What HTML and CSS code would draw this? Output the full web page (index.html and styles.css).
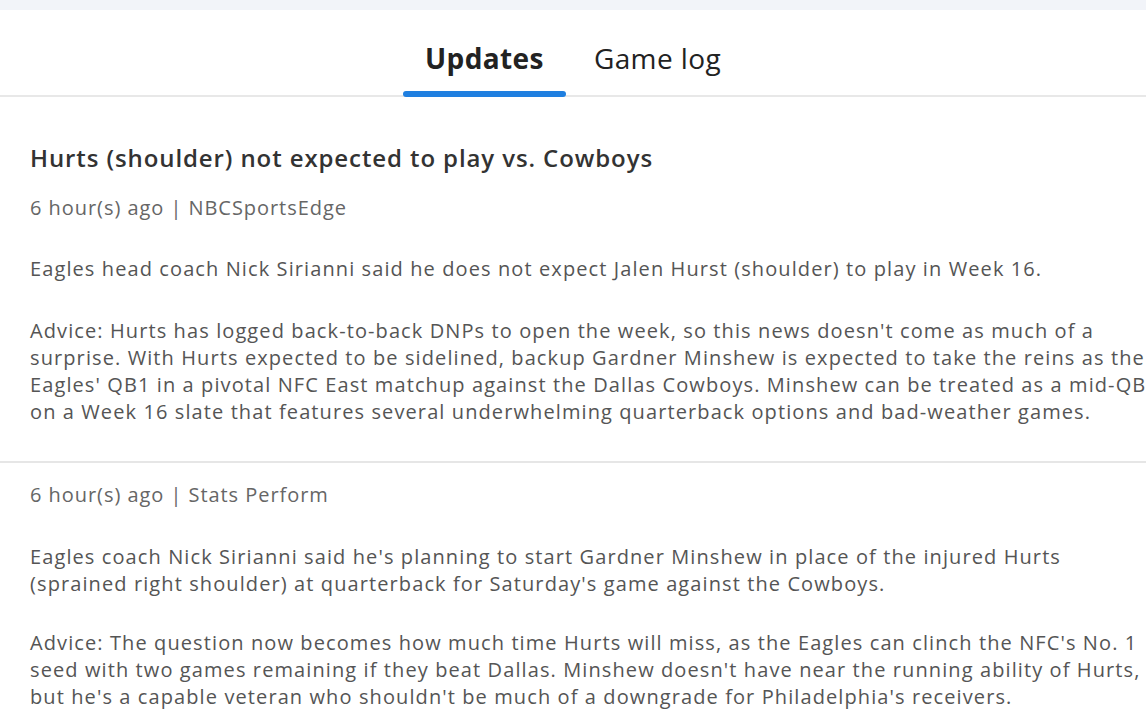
FILE: index.html
```html
<!DOCTYPE html>
<html lang="en">
<head>
<meta charset="utf-8">
<title>Player updates</title>
<link rel="stylesheet" href="styles.css">
</head>
<body>
<div class="topstrip"></div>
<nav class="tabs">
  <div class="tab active">Updates</div>
  <div class="tab">Game log</div>
</nav>
<main class="feed">
  <article class="update">
    <h2 class="title">Hurts (shoulder) not expected to play vs. Cowboys</h2>
    <div class="meta">6 hour(s) ago | NBCSportsEdge</div>
    <p class="body first">Eagles head coach Nick Sirianni said he does not expect Jalen Hurst (shoulder) to play in Week 16.</p>
    <p class="body advice">Advice: Hurts has logged back-to-back DNPs to open the week, so this news doesn't come as much of a surprise. With Hurts expected to be sidelined, backup Gardner Minshew is expected to take the reins as the Eagles' QB1 in a pivotal NFC East matchup against the Dallas Cowboys. Minshew can be treated as a mid-QB2 on a Week 16 slate that features several underwhelming quarterback options and bad-weather games.</p>
  </article>
  <article class="update">
    <div class="meta">6 hour(s) ago | Stats Perform</div>
    <p class="body first">Eagles coach Nick Sirianni said he's planning to start Gardner Minshew in place of the injured Hurts (sprained right shoulder) at quarterback for Saturday's game against the Cowboys.</p>
    <p class="body advice">Advice: The question now becomes how much time Hurts will miss, as the Eagles can clinch the NFC's No. 1 seed with two games remaining if they beat Dallas. Minshew doesn't have near the running ability of Hurts, but he's a capable veteran who shouldn't be much of a downgrade for Philadelphia's receivers.</p>
  </article>
</main>
</body>
</html>
```
FILE: styles.css
```css
html, body {
  margin: 0;
  padding: 0;
  overflow: hidden;
  background: #ffffff;
}
body {
  font-family: "Open Sans", "Noto Sans", sans-serif;
  width: 1146px;
  height: 716px;
}
.topstrip {
  height: 10px;
  background: #f2f4f9;
}
.tabs {
  display: flex;
  justify-content: center;
  gap: 6px;
  border-bottom: 2px solid #e8e8e8;
  padding-top: 29px;
}
.tab {
  font-size: 28px;
  letter-spacing: 0.4px;
  color: #222;
  padding: 0 22px 18px;
  position: relative;
  line-height: 38px;
}
.tab.active {
  font-weight: 700;
}
.tab.active::after {
  content: "";
  position: absolute;
  left: 0;
  right: 0;
  bottom: -2px;
  height: 6px;
  border-radius: 3px;
  background: #1f7fe0;
}
.feed {
  width: 1165px;
}
.update {
  padding: 18px 0 32px 30px;
  border-bottom: 2px solid #e6e6e6;
}
.update:first-child {
  padding-top: 45px;
  padding-bottom: 36px;
}
.update:last-child {
  border-bottom: none;
}
.title {
  margin: 0 0 20px;
  font-size: 24px;
  font-weight: 600;
  letter-spacing: 0.9px;
  color: #333;
  line-height: 32px;
}
.meta {
  font-size: 20px;
  letter-spacing: 0.95px;
  color: #666;
  line-height: 28px;
}
.body {
  margin: 0;
  font-size: 20px;
  letter-spacing: 1.1px;
  line-height: 27px;
  color: #555;
}
.body.first {
  margin-top: 33px;
}
.body.advice {
  margin-top: 35px;
}
.update:last-child .body.first {
  margin-top: 34px;
  max-width: 1095px;
}
.update:last-child .body.advice {
  margin-top: 32px;
}
```
